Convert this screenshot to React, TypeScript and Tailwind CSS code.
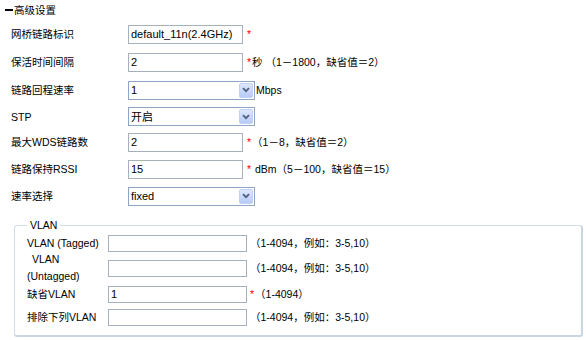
import React from "react";

const Star = () => <span className="text-[#ff0000] mr-[1px]">*</span>;

function TextBox({ value, w = "w-[115px]", h = "h-[19px]" }: { value?: string; w?: string; h?: string }) {
  return (
    <div className={`${w} ${h} border border-[#a7b0bd] bg-white flex items-center pl-[2px] text-[11px] shrink-0`}>
      {value}
    </div>
  );
}

function Select({ value }: { value: string }) {
  return (
    <div className="w-[127px] h-[19px] border border-[#8fa5c4] bg-white flex items-center text-[11px] shrink-0">
      <span className="flex-1 pl-[2px]">{value}</span>
      <span className="w-[14px] h-[15px] mr-[1px] bg-gradient-to-b from-[#dde7fd] to-[#b7cbf7] border border-[#c2d1f3] rounded-[2px] flex items-center justify-center">
        <svg width="8" height="6" viewBox="0 0 8 6">
          <path d="M1 1.2 L4 4.2 L7 1.2" fill="none" stroke="#4d6185" strokeWidth="1.8" />
        </svg>
      </span>
    </div>
  );
}

function Row({ h, label, children }: { h: string; label: string; children: React.ReactNode }) {
  return (
    <div className={`${h} flex items-center`}>
      <div className="w-[128px] pl-[11px] shrink-0">{label}</div>
      {children}
    </div>
  );
}

function VRow({ h, label, children }: { h: string; label: React.ReactNode; children: React.ReactNode }) {
  return (
    <div className={`${h} flex items-center`}>
      <div className="w-[81px] shrink-0 leading-[17px]">{label}</div>
      {children}
    </div>
  );
}

export default function App() {
  return (
    <div className="w-[586px] h-[340px] overflow-hidden bg-white text-black text-[10.5px] leading-[14px] font-['Liberation_Sans','Noto_Sans_CJK_SC',sans-serif]">
      <div className="h-[20px] flex items-center pl-[5px]">
        <span className="w-[8px] h-[2px] bg-black mr-[1px]" />
        <span>高级设置</span>
      </div>

      <Row h="h-[28px]" label="网桥链路标识">
        <TextBox value="default_11n(2.4GHz)" />
        <span className="ml-[4px]"><Star /></span>
      </Row>
      <Row h="h-[28px]" label="保活时间间隔">
        <TextBox value="2" />
        <span className="ml-[4px]"><Star />秒 （1－1800，缺省值＝2）</span>
      </Row>
      <Row h="h-[28px]" label="链路回程速率">
        <Select value="1" />
        <span className="ml-[1px]">Mbps</span>
      </Row>
      <Row h="h-[25px]" label="STP">
        <Select value="开启" />
      </Row>
      <Row h="h-[26px]" label="最大WDS链路数">
        <TextBox value="2" />
        <span className="ml-[4px]"><Star />（1－8，缺省值＝2）</span>
      </Row>
      <Row h="h-[28px]" label="链路保持RSSI">
        <TextBox value="15" />
        <span className="ml-[4px]"><Star /> dBm（5－100，缺省值＝15）</span>
      </Row>
      <Row h="h-[26px]" label="速率选择">
        <Select value="fixed" />
      </Row>

      <fieldset className="mt-[9px] ml-[14px] w-[569px] border border-[#d3dce8] border-r-2 border-b-2 border-r-[#c9d5e3] border-b-[#c9d5e3] rounded-[3px] px-[12px] pb-[7px]">
        <legend className="ml-0 px-[3px] leading-[14px]">VLAN</legend>
        <VRow h="h-[22px]" label="VLAN (Tagged)">
          <TextBox w="w-[139px]" h="h-[17px]" />
          <span className="ml-[3px]">（1-4094，例如：3-5,10）</span>
        </VRow>
        <VRow
          h="h-[28px]"
          label={
            <>
              <span className="pl-[5px]">VLAN</span>
              <br />
              (Untagged)
            </>
          }
        >
          <TextBox w="w-[139px]" h="h-[17px]" />
          <span className="ml-[3px]">（1-4094，例如：3-5,10）</span>
        </VRow>
        <VRow h="h-[24px]" label="缺省VLAN">
          <TextBox w="w-[139px]" h="h-[17px]" value="1" />
          <span className="ml-[3px]"><Star />（1-4094）</span>
        </VRow>
        <VRow h="h-[22px]" label="排除下列VLAN">
          <TextBox w="w-[139px]" h="h-[17px]" />
          <span className="ml-[3px]">（1-4094，例如：3-5,10）</span>
        </VRow>
      </fieldset>
    </div>
  );
}
